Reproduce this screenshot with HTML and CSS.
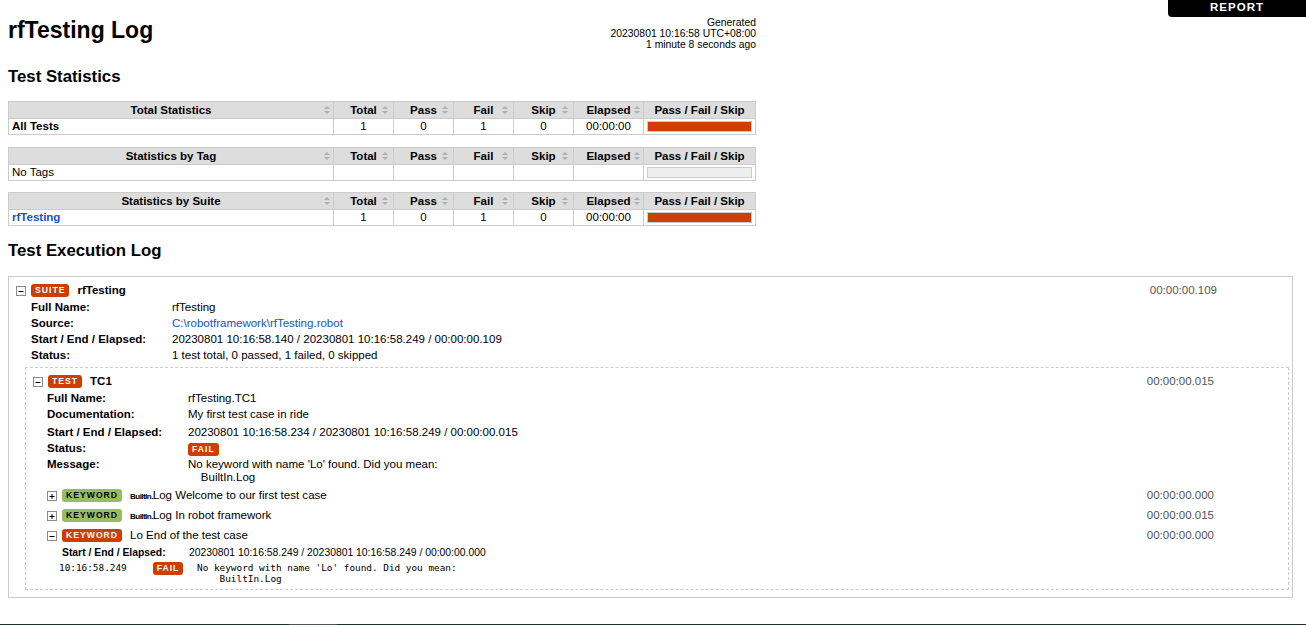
FILE: index.html
```html
<!DOCTYPE html>
<html>
<head>
<meta charset="utf-8">
<title>rfTesting Log</title>
<link rel="stylesheet" href="styles.css">
</head>
<body>
<div class="report-link"><a href="#">REPORT</a></div>

<div class="header">
  <h1>rfTesting Log</h1>
  <div class="generated">Generated<br>20230801 10:16:58 UTC+08:00<br>1 minute 8 seconds ago</div>
</div>

<h2 class="section-title">Test Statistics</h2>

<table class="statistics">
  <colgroup><col class="c-name"><col class="c-stat"><col class="c-stat"><col class="c-stat"><col class="c-stat"><col class="c-elapsed"><col class="c-graph"></colgroup>
  <thead>
    <tr><th class="sortable sort-edge">Total Statistics</th><th class="sortable">Total</th><th class="sortable">Pass</th><th class="sortable">Fail</th><th class="sortable">Skip</th><th class="sortable sort-edge">Elapsed</th><th>Pass / Fail / Skip</th></tr>
  </thead>
  <tbody>
    <tr><td><span class="bold">All Tests</span></td><td class="num">1</td><td class="num">0</td><td class="num">1</td><td class="num">0</td><td class="num">00:00:00</td><td class="graph-cell"><div class="graph"><div class="fail-bar"></div></div></td></tr>
  </tbody>
</table>

<table class="statistics">
  <colgroup><col class="c-name"><col class="c-stat"><col class="c-stat"><col class="c-stat"><col class="c-stat"><col class="c-elapsed"><col class="c-graph"></colgroup>
  <thead>
    <tr><th class="sortable sort-edge">Statistics by Tag</th><th class="sortable">Total</th><th class="sortable">Pass</th><th class="sortable">Fail</th><th class="sortable">Skip</th><th class="sortable sort-edge">Elapsed</th><th>Pass / Fail / Skip</th></tr>
  </thead>
  <tbody>
    <tr><td>No Tags</td><td class="num"></td><td class="num"></td><td class="num"></td><td class="num"></td><td class="num"></td><td class="graph-cell"><div class="graph"></div></td></tr>
  </tbody>
</table>

<table class="statistics">
  <colgroup><col class="c-name"><col class="c-stat"><col class="c-stat"><col class="c-stat"><col class="c-stat"><col class="c-elapsed"><col class="c-graph"></colgroup>
  <thead>
    <tr><th class="sortable sort-edge">Statistics by Suite</th><th class="sortable">Total</th><th class="sortable">Pass</th><th class="sortable">Fail</th><th class="sortable">Skip</th><th class="sortable sort-edge">Elapsed</th><th>Pass / Fail / Skip</th></tr>
  </thead>
  <tbody>
    <tr><td><a class="bold" href="#">rfTesting</a></td><td class="num">1</td><td class="num">0</td><td class="num">1</td><td class="num">0</td><td class="num">00:00:00</td><td class="graph-cell"><div class="graph"><div class="fail-bar"></div></div></td></tr>
  </tbody>
</table>

<h2 class="section-title log-title">Test Execution Log</h2>

<div class="suite">
  <div class="element-header">
    <div class="header-left">
      <svg class="toggle" width="10" height="10" viewBox="0 0 10 10"><rect x="0.5" y="0.5" width="9" height="9" fill="#fff" stroke="#8a8a8a"/><path d="M2.5 5.5h5" stroke="#000" stroke-width="1"/></svg>
      <span class="label fail">SUITE</span>
      <span class="name bold">rfTesting</span>
    </div>
    <div class="elapsed">00:00:00.109</div>
  </div>
  <div class="children suite-children">
    <table class="metadata">
      <tr><th>Full Name:</th><td>rfTesting</td></tr>
      <tr><th>Source:</th><td><a href="#">C:\robotframework\rfTesting.robot</a></td></tr>
      <tr><th>Start / End / Elapsed:</th><td>20230801 10:16:58.140 / 20230801 10:16:58.249 / 00:00:00.109</td></tr>
      <tr><th>Status:</th><td>1 test total, 0 passed, 1 failed, 0 skipped</td></tr>
    </table>

    <div class="test">
      <div class="element-header">
        <div class="header-left">
          <svg class="toggle" width="10" height="10" viewBox="0 0 10 10"><rect x="0.5" y="0.5" width="9" height="9" fill="#fff" stroke="#8a8a8a"/><path d="M2.5 5.5h5" stroke="#000" stroke-width="1"/></svg>
          <span class="label fail">TEST</span>
          <span class="name bold">TC1</span>
        </div>
        <div class="elapsed">00:00:00.015</div>
      </div>
      <div class="children">
        <table class="metadata">
          <tr><th>Full Name:</th><td>rfTesting.TC1</td></tr>
          <tr class="doc-row"><th>Documentation:</th><td>My first test case in ride</td></tr>
          <tr><th>Start / End / Elapsed:</th><td>20230801 10:16:58.234 / 20230801 10:16:58.249 / 00:00:00.015</td></tr>
          <tr><th>Status:</th><td class="status-cell"><span class="label fail">FAIL</span></td></tr>
          <tr><th>Message:</th><td class="message">No keyword with name 'Lo' found. Did you mean:
    BuiltIn.Log</td></tr>
        </table>

        <div class="kw">
          <div class="element-header">
            <div class="header-left">
              <svg class="toggle" width="10" height="10" viewBox="0 0 10 10"><rect x="0.5" y="0.5" width="9" height="9" fill="#fff" stroke="#8a8a8a"/><path d="M2.5 5.5h5M5 3v5" stroke="#000" stroke-width="1"/></svg>
              <span class="label pass">KEYWORD</span>
              <span class="name"><span class="parent-name">BuiltIn.</span>Log <span class="arg">Welcome to our first test case</span></span>
            </div>
            <div class="elapsed">00:00:00.000</div>
          </div>
        </div>

        <div class="kw">
          <div class="element-header">
            <div class="header-left">
              <svg class="toggle" width="10" height="10" viewBox="0 0 10 10"><rect x="0.5" y="0.5" width="9" height="9" fill="#fff" stroke="#8a8a8a"/><path d="M2.5 5.5h5M5 3v5" stroke="#000" stroke-width="1"/></svg>
              <span class="label pass">KEYWORD</span>
              <span class="name"><span class="parent-name">BuiltIn.</span>Log <span class="arg">In robot framework</span></span>
            </div>
            <div class="elapsed">00:00:00.015</div>
          </div>
        </div>

        <div class="kw">
          <div class="element-header">
            <div class="header-left">
              <svg class="toggle" width="10" height="10" viewBox="0 0 10 10"><rect x="0.5" y="0.5" width="9" height="9" fill="#fff" stroke="#8a8a8a"/><path d="M2.5 5.5h5" stroke="#000" stroke-width="1"/></svg>
              <span class="label fail">KEYWORD</span>
              <span class="name">Lo <span class="arg">End of the test case</span></span>
            </div>
            <div class="elapsed">00:00:00.000</div>
          </div>
          <div class="children">
            <table class="metadata kw-metadata">
              <tr><th>Start / End / Elapsed:</th><td>20230801 10:16:58.249 / 20230801 10:16:58.249 / 00:00:00.000</td></tr>
            </table>
            <table class="messages">
              <tr>
                <td class="msg-time">10:16:58.249</td>
                <td class="msg-level"><span class="label fail">FAIL</span></td>
                <td class="msg-text">No keyword with name 'Lo' found. Did you mean:
    BuiltIn.Log</td>
              </tr>
            </table>
          </div>
        </div>
      </div>
    </div>
  </div>
</div>

<div class="taskbar"></div>
</body>
</html>
```

FILE: styles.css
```css
html, body {
  margin: 0;
}

body {
  font-family: "Liberation Sans", Arial, Helvetica, sans-serif;
  font-size: 11.52px;
  line-height: 13px;
  color: #000;
  background: #fff;
  padding: 17px 13px 0 8px;
}

a {
  color: #15c;
  text-decoration: none;
}

.bold {
  font-weight: bold;
}

/* Report link */
.report-link {
  position: fixed;
  top: 0;
  right: 0;
  z-index: 10;
}

.report-link a {
  display: block;
  width: 138px;
  line-height: 14px;
  padding-bottom: 3px;
  background: #000;
  color: #fff;
  font-weight: bold;
  font-size: 11.52px;
  letter-spacing: 1px;
  text-align: center;
  border-bottom-left-radius: 4px;
}

/* Header */
.header {
  width: 748px;
  height: 35px;
  display: flex;
  justify-content: space-between;
  align-items: flex-start;
}

.header h1 {
  margin: 0;
  font-size: 23px;
  line-height: 26px;
  font-weight: bold;
}

.generated {
  font-size: 10.37px;
  line-height: 11px;
  text-align: right;
  white-space: nowrap;
}

.section-title {
  font-size: 16.8px;
  line-height: 20px;
  font-weight: bold;
  margin: 15px 0 14px;
}

.log-title {
  margin-top: 15px;
  margin-bottom: 15px;
}

/* Statistics */
.statistics {
  width: 748px;
  border-collapse: collapse;
  table-layout: fixed;
  margin-bottom: 11.5px;
}

.c-stat { width: 60px; }
.c-elapsed { width: 70px; }
.c-graph { width: 112px; }

.statistics th,
.statistics td {
  border: 1px solid #ccc;
}

.statistics th {
  position: relative;
  background: #ddd;
  font-weight: bold;
  text-align: center;
  line-height: 12px;
  padding: 2px 3px;
  white-space: nowrap;
}

.statistics td {
  line-height: 13px;
  padding: 1px 3px;
  vertical-align: middle;
}

.statistics td.num {
  text-align: center;
}

.statistics td.graph-cell {
  padding: 1px 3px;
}

.sortable::before,
.sortable::after {
  content: "";
  position: absolute;
  right: 5px;
  width: 0;
  height: 0;
  border-left: 3px solid transparent;
  border-right: 3px solid transparent;
}

.sortable::before {
  top: calc(50% - 4px);
  border-bottom: 3px solid #b0b0b0;
}

.sortable::after {
  top: calc(50% + 1px);
  border-top: 3px solid #b0b0b0;
}

.sort-edge::before,
.sort-edge::after {
  right: 3px;
}

.graph {
  height: 9px;
  border: 1px solid #ccc;
  background: #eee;
}

.fail-bar {
  height: 100%;
  background: #ce3e01;
}

/* Log elements */
.suite {
  border: 1px solid #ccc;
  padding: 0 0 7px 0;
}

.test {
  border: 1px dashed #ccc;
  margin-top: 4px;
  padding-bottom: 4px;
}

.element-header {
  display: flex;
  align-items: center;
  justify-content: space-between;
  padding: 6px 74px 1px 7px;
  line-height: 15px;
}

.suite > .element-header {
  padding-right: 75px;
}

.kw > .element-header {
  padding: 3px 74px 2px 6px;
}

.header-left {
  display: flex;
  align-items: center;
  height: 15px;
  white-space: nowrap;
}

.toggle {
  display: block;
  flex: none;
  margin-right: 5px;
}

.label {
  display: inline-block;
  font-size: 8.64px;
  font-weight: bold;
  letter-spacing: 1px;
  line-height: 9px;
  padding: 2px 4px;
  border-radius: 3px;
  background: #ddd;
  color: #000;
  white-space: nowrap;
}

.label.fail {
  background: #ce3e01;
  color: #fff;
}

.label.pass {
  background: #97bd61;
  color: #000;
}

.name {
  margin-left: 8px;
  line-height: 15px;
}

.parent-name {
  font-size: 8.06px;
  line-height: 1;
  font-weight: bold;
  letter-spacing: -0.07em;
}

.elapsed {
  color: #555;
  white-space: nowrap;
}

.children {
  margin-left: 15px;
}

.suite-children {
  margin-left: 16px;
  margin-right: 3px;
}

/* Metadata */
.metadata {
  border-collapse: collapse;
}

.metadata th {
  text-align: left;
  font-weight: bold;
  vertical-align: top;
  width: 141px;
  padding: 1.5px 0 1.5px 6px;
  line-height: 13px;
  white-space: nowrap;
}

.metadata td {
  vertical-align: top;
  padding: 1.5px 0;
  line-height: 13px;
}

.metadata .doc-row th,
.metadata .doc-row td {
  padding-bottom: 3.5px;
}

.metadata td.status-cell {
  height: 13px;
  padding: 3px 0 0;
}

.status-cell .label {
  display: block;
  width: max-content;
}

.message {
  white-space: pre-wrap;
}

.kw-metadata th,
.kw-metadata td {
  font-size: 10.37px;
  line-height: 12px;
}

.kw-metadata th {
  width: 127px;
}

/* Messages */
.messages {
  border-collapse: collapse;
}

.messages td {
  vertical-align: top;
  padding: 2px 0 1px;
}

.msg-time,
.msg-text {
  font-family: "DejaVu Sans Mono", "Liberation Mono", monospace;
  font-size: 9.4px;
  line-height: 11px;
}

.msg-time {
  width: 85px;
  padding-left: 3px !important;
  white-space: nowrap;
}

.msg-level {
  width: 48px;
  text-align: center;
  line-height: 13px;
}

.msg-level .label {
  vertical-align: top;
}

.msg-text {
  white-space: pre-wrap;
  padding-left: 5px !important;
}

.taskbar {
  position: fixed;
  left: 0;
  right: 0;
  bottom: 0;
  height: 1px;
  background: linear-gradient(to right, #1d2c31 289px, #4a565b 289px, #4a565b 337px, #1d2c31 337px);
}
```
